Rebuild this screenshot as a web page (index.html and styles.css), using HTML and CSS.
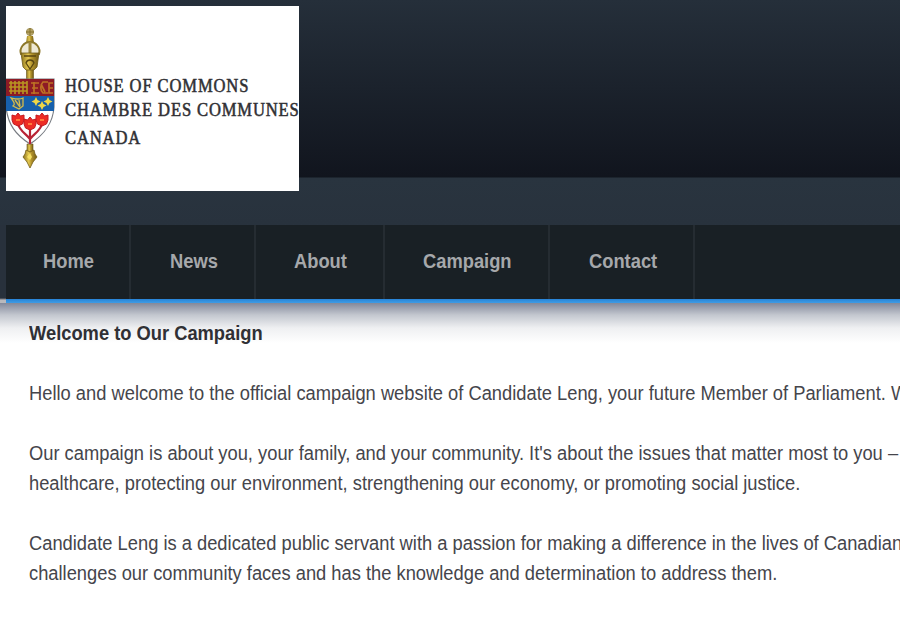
FILE: index.html
```html
<!DOCTYPE html>
<html lang="en">
<head>
<meta charset="utf-8">
<title>Welcome to Our Campaign</title>
<link rel="stylesheet" href="styles.css">
</head>
<body>
<header class="masthead">
  <a class="logo">
    <svg class="arms" viewBox="0 0 50 144" width="50" height="144" aria-hidden="true">
      <defs>
        <linearGradient id="gold"><stop offset="0" stop-color="#8c741d"/><stop offset=".4" stop-color="#e3c750"/><stop offset=".6" stop-color="#b4942c"/><stop offset="1" stop-color="#6f5914"/></linearGradient>
      </defs>
      <path d="M20.500 40h7v14h-7zM21 117h6v8h-6z" fill="url(#gold)" stroke="#665218" stroke-width=".6"/>
      <circle cx="24" cy="5" r="3.600" fill="#b7a365" stroke="#a3945c"/>
      <path d="M24 1v14M20 5h8" stroke="#81702d" stroke-width="1"/>
      <path d="M21 9h6l1 7h-8z" fill="url(#gold)"/>
      <path d="M15 27c-2-6 3-12 9-12s11 6 9 12z" fill="#eee9d4" stroke="#8c7729" stroke-width="2"/>
      <path d="M24 15v12" fill="none" stroke="#9c873a" stroke-width="3"/>
      <path d="M15 26h18l-2 14-3 3h-8l-3-3z" fill="url(#gold)" stroke="#6e5a1b" stroke-width=".8"/>
      <path d="M18 29h12M20 36c1-4 7-4 8 0l-4 6z" fill="none" stroke="#594611" stroke-width="1.300"/>
      <path d="M0 52h48v28c-1 16-9 27-24 37C10 108 2 98 0 80z" fill="#fff" stroke="#777b82" stroke-width="1.200"/>
      <path d="M0 52h48v17H0z" fill="#8d1b25"/>
      <path d="M3 56h18M3 60h18M3 64h18M5 54v13M9 54v13M13 54v13M17 54v13M21 54v13" stroke="#b99622" stroke-width="1.600"/>
      <path d="M25 56h8M26 61h6M25 66h8M28 55v12M42 55h-5c-3 3-3 8 0 11h5M47 56h-4v10h4M43 61h4M35 57l4 8" fill="none" stroke="#bd7224" stroke-width="1.700"/>
      <path d="M0 69h48v15H0z" fill="#1760ac"/>
      <path d="M5 71c5 1 8 2 12 0v8l-4 3-6-3c3-2 0-5-2-8zM9 73l5 7M13 73l1 6" fill="#315e87" stroke="#d4bb4d" stroke-width="1.300"/>
      <path id="lily" d="m30 70 1.500 3 3 1.500-3 1.500-1.500 3-1.500-3-3-1.500 3-1.500z" fill="#f0d746"/>
      <use href="#lily" x="12"/><use href="#lily" x="6" y="4"/>
      <path d="M12 97c2 7 7 9 12 15 5-6 10-8 12-15M24 98v19" fill="none" stroke="#b82335" stroke-width="2.200"/>
      <path id="leaf" d="m12 86 2.500 3 3.500-1v5l-1.500 4-4.500 2-4.500-2-1.500-4v-5l3.500 1z" fill="#ed2c24" stroke="#c31b22"/>
      <use href="#leaf" x="12" y="4"/><use href="#leaf" x="24"/>
      <path d="M10 93h4M22 97h4M34 93h4" stroke="#ff7a3c" stroke-width="2"/>
      <path d="m20 123 4 2 4-2 1 4 2 3-4 5-3 6-3-6-4-5 2-3z" fill="url(#gold)" stroke="#725c16" stroke-width=".8"/>
      <path d="m21 130 3-4 2 4-2 3z" fill="#f5df63"/>
    </svg>
    <span class="wordmark"><span>HOUSE OF COMMONS</span><span>CHAMBRE DES COMMUNES</span><span class="canada">CANADA</span></span>
  </a>
</header>
<nav class="menu">
  <a class="home"><span>Home</span></a><a class="news"><span>News</span></a><a class="about"><span>About</span></a><a class="campaign"><span>Campaign</span></a><a class="contact"><span>Contact</span></a>
</nav>
<main class="content">
  <h1>Welcome to Our Campaign</h1>
  <p>Hello and welcome to the official campaign website of Candidate Leng, your future Member of Parliament. W</p>
  <p>Our campaign is about you, your family, and your community. It's about the issues that matter most to you –<br>healthcare, protecting our environment, strengthening our economy, or promoting social justice.</p>
  <p>Candidate Leng is a dedicated public servant with a passion for making a difference in the lives of Canadian<br>challenges our community faces and has the knowledge and determination to address them.</p>
</main>
</body>
</html>
```
FILE: styles.css
```css
* { box-sizing: border-box; }
body {
  margin: 0;
  width: 900px;
  height: 621px;
  overflow: hidden;
  background: #fff;
  font-family: "Liberation Sans", Arial, sans-serif;
}
.masthead {
  height: 225px;
  padding: 6px;
  background: linear-gradient(#252f3a, #11151e 176px, #10151d 177px, #29343f 178px, #28323d);
}
.logo {
  display: flex;
  width: 293px;
  height: 185px;
  padding-top: 21px;
  background: #fff;
}
.arms { flex: none; }
.wordmark {
  display: flex;
  flex-direction: column;
  align-items: flex-start;
  padding: 47px 0 0 9px;
  color: #303034;
  font: 19px/24px "Liberation Serif", serif;
  letter-spacing: 1px;
  white-space: nowrap;
  -webkit-text-stroke: .55px #303034;
}
.wordmark span { transform: scaleX(.872); transform-origin: left; }
.wordmark .canada { margin-top: 4px; }
.menu {
  display: flex;
  height: 78px;
  padding: 0 0 4px 6px;
  background:
    linear-gradient(#28313c 73px, #b9b9bd 75px) 0 0 / 6px 78px no-repeat,
    linear-gradient(#192025 74px, #2783d8 74px, #409ce4);
  font-size: 20px;
  font-weight: bold;
  color: #a6a8ab;
}
.menu a {
  display: flex;
  align-items: center;
  padding: 0 0 2px 38px;
  border-right: 2px solid #252c32;
}
.menu span { transform: scaleX(.916); transform-origin: left; }
.menu .home { width: 125px; padding-left: 37px; }
.menu .news { width: 125px; padding-left: 39px; }
.about { width: 129px; }
.campaign { width: 165px; }
.menu .contact { width: 145px; padding-left: 39px; }
.content {
  height: 318px;
  padding: 16px 0 0 29px;
  background: linear-gradient(#83889a, #c3c7cf 12px, #eff0f2 25px, #fff 40px);
  color: #45454b;
  font-size: 20px;
  line-height: 29.5px;
  white-space: nowrap;
}
.content h1, .content p { margin: 0 0 31px; transform: scaleX(.9157); transform-origin: left; }
.content h1 { margin-bottom: 30px; font-size: 20px; color: #303035; }
```
